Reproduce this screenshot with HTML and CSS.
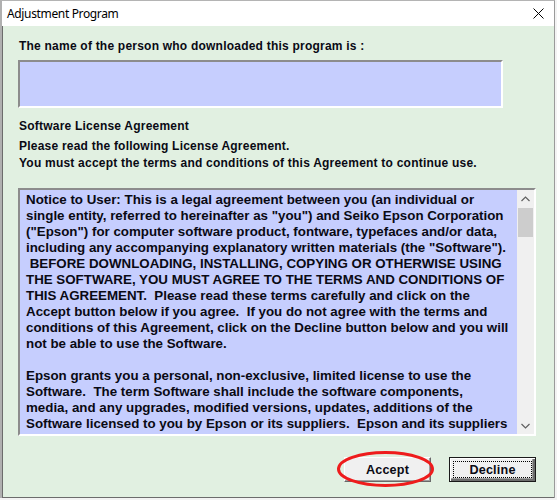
FILE: index.html
```html
<!DOCTYPE html>
<html>
<head>
<meta charset="utf-8">
<title>Adjustment Program</title>
<link rel="stylesheet" href="styles.css">
</head>
<body>
<div class="window">
  <div class="titlebar">
    <span class="title">Adjustment Program</span>
    <svg class="close" width="11" height="11" viewBox="0 0 11 11"><path d="M0.5 0.5 L10.5 10.5 M10.5 0.5 L0.5 10.5" stroke="#000" stroke-width="1" fill="none"/></svg>
  </div>
  <div class="client">
    <div class="label name-label">The name of the person who downloaded this program is :</div>
    <div class="namebox"></div>
    <div class="label section">Software License Agreement</div>
    <div class="label intro">Please read the following License Agreement.<br>You must accept the terms and conditions of this Agreement to continue use.</div>
    <div class="license">
      <div class="license-text">
        <p>Notice to User: This is a legal agreement between you (an individual or<br>single entity, referred to hereinafter as "you") and Seiko Epson Corporation<br>("Epson") for computer software product, fontware, typefaces and/or data,<br>including any accompanying explanatory written materials (the "Software").<br>&nbsp;BEFORE DOWNLOADING, INSTALLING, COPYING OR OTHERWISE USING<br>THE SOFTWARE, YOU MUST AGREE TO THE TERMS AND CONDITIONS OF<br>THIS AGREEMENT.&nbsp; Please read these terms carefully and click on the<br>Accept button below if you agree.&nbsp; If you do not agree with the terms and<br>conditions of this Agreement, click on the Decline button below and you will<br>not be able to use the Software.</p>
        <p>Epson grants you a personal, non-exclusive, limited license to use the<br>Software.&nbsp; The term Software shall include the software components,<br>media, and any upgrades, modified versions, updates, additions of the<br>Software licensed to you by Epson or its suppliers.&nbsp; Epson and its suppliers</p>
      </div>
      <div class="scrollbar">
        <div class="arrow">
          <svg width="9" height="6" viewBox="0 0 9 6"><path d="M0.5 5 L4.5 1 L8.5 5" stroke="#606060" stroke-width="1.2" fill="none"/></svg>
        </div>
        <div class="track"><div class="thumb"></div></div>
        <div class="arrow">
          <svg width="9" height="6" viewBox="0 0 9 6"><path d="M0.5 1 L4.5 5 L8.5 1" stroke="#606060" stroke-width="1.2" fill="none"/></svg>
        </div>
      </div>
    </div>
    <div class="buttons">
      <div class="btn-wrap">
        <div class="btn">Accept</div>
        <svg class="ring" width="99" height="38" viewBox="0 0 99 38"><ellipse cx="49.5" cy="19" rx="47" ry="16.5" fill="none" stroke="#ee1c1c" stroke-width="3"/></svg>
      </div>
      <div class="btn default"><span class="focus">Decline</span></div>
    </div>
  </div>
</div>
</body>
</html>
```

FILE: styles.css
```css
html, body {
  margin: 0;
  padding: 0;
  background: #f3f3f3;
}

.window {
  width: 552px;
  height: 497px;
  border-top: 1px solid #b4b4b4;
  border-left: 2px solid #b0b0b0;
  border-right: 1px solid #9a9a9a;
  display: flex;
  flex-direction: column;
}

.titlebar {
  height: 25px;
  flex: none;
  background: #ffffff;
  display: flex;
  align-items: center;
  justify-content: space-between;
  padding: 0 10px 0 5px;
}

.title {
  font-family: "Noto Sans", "DejaVu Sans", sans-serif;
  font-size: 12px;
  letter-spacing: -0.35px;
  color: #000;
}

.close {
  display: block;
}

.client {
  flex: 1;
  background: #e1f0e1;
  border-left: 1px solid #6c6c6c;
  border-bottom: 1px solid #6c6c6c;
  padding: 12px 18px 0 15px;
  font-family: "Liberation Sans", Arial, sans-serif;
  font-weight: bold;
  font-size: 12px;
  color: #0a0a14;
}

.label {
  line-height: 17px;
  padding-left: 1px;
  letter-spacing: 0.22px;
}

.namebox {
  margin-top: 5px;
  width: 481px;
  height: 44px;
  background: #c6cefe;
  border-top: 2px solid #8c8c8c;
  border-left: 2px solid #8c8c8c;
  border-right: 2px solid #ffffff;
  border-bottom: 2px solid #ffffff;
}

.section {
  margin-top: 10px;
}

.intro {
  margin-top: 3px;
}

.license {
  margin-top: 16px;
  width: 514px;
  height: 244px;
  background: #c6cefe;
  border-top: 2px solid #8c8c8c;
  border-left: 2px solid #8c8c8c;
  border-right: 2px solid #ffffff;
  border-bottom: 2px solid #ffffff;
  display: flex;
  overflow: hidden;
}

.license-text {
  flex: 1;
  padding: 2px 0 0 6px;
  font-size: 13.33px;
  line-height: 16px;
  overflow: hidden;
  white-space: nowrap;
}

.license-text p {
  margin: 0 0 16px 0;
}

.license-text p:last-child {
  margin-bottom: 0;
}

.scrollbar {
  width: 17px;
  flex: none;
  background: #f0f0f0;
  display: flex;
  flex-direction: column;
}

.arrow {
  height: 17px;
  flex: none;
  display: flex;
  align-items: center;
  justify-content: center;
}

.track {
  flex: 1;
  padding: 1px 1px;
}

.thumb {
  height: 29px;
  background: #cdcdcd;
}

.buttons {
  margin-top: 21px;
  display: flex;
  justify-content: flex-end;
  gap: 18px;
}

.btn-wrap {
  position: relative;
}

.btn {
  width: 87px;
  height: 25px;
  box-sizing: border-box;
  background: #f0f0f0;
  border-top: 1px solid #ffffff;
  border-left: 1px solid #ffffff;
  border-right: 1px solid #696969;
  border-bottom: 1px solid #696969;
  box-shadow: inset -1px -1px 0 #a0a0a0;
  display: flex;
  align-items: center;
  justify-content: center;
  font-size: 12.6px;
  letter-spacing: 0.2px;
  color: #0a0a14;
}

.btn.default {
  border: 1px solid #1a1a1a;
  box-shadow: inset 1px 1px 0 #ffffff, inset -2px -2px 0 #6c6c6c, inset -3px -3px 0 #a0a0a0;
  padding: 3px;
}

.focus {
  flex: 1;
  align-self: stretch;
  display: flex;
  align-items: center;
  justify-content: center;
  border: 1px dotted #000;
}

.ring {
  position: absolute;
  left: -8px;
  top: -7px;
  pointer-events: none;
}
```
